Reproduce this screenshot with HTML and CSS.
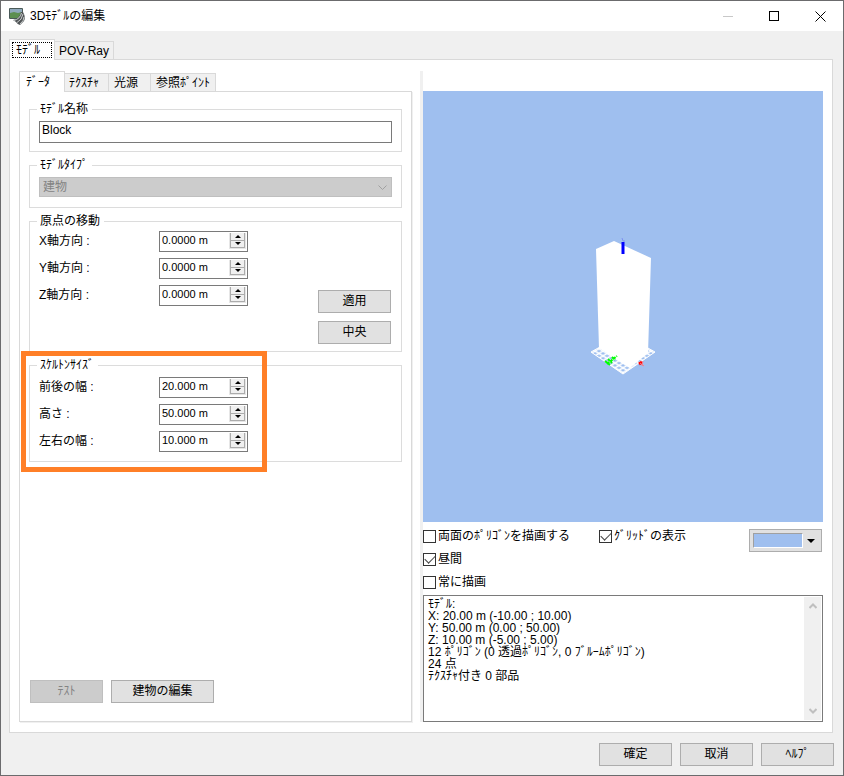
FILE: index.html
```html
<!DOCTYPE html>
<html lang="ja">
<head>
  <meta charset="UTF-8">
  <meta name="viewport" content="width=device-width, initial-scale=1.0">
  <title>3Dﾓﾃﾞﾙの編集</title>
  <link rel="stylesheet" href="styles.css">
</head>
<body>
  <div class="window">
    <header class="titlebar">
      <svg class="app-icon" width="16" height="17" viewBox="0 0 16 17">
        <rect x="0" y="0" width="14" height="11" rx="1" fill="#4a5a58"/>
        <rect x="1" y="1" width="12" height="4" fill="#8fa9bb"/>
        <path d="M1 5L5 4L9 5L13 4V10H1Z" fill="#5c8f50"/>
        <path d="M4 12Q10 11 12 4L14 4Q17 9 15 13L11 17Q9 17 7 14Z" fill="#505456"/>
        <path d="M5 12.500Q11 11 12.500 5M8 14.500Q13 12 14 6M11 16Q15 13 15 9" fill="none" stroke="#c9cdcd"/>
      </svg>
      <h1 class="title">3Dﾓﾃﾞﾙの編集</h1>
      <div class="window-buttons">
        <button type="button" aria-label="最小化" disabled>
          <svg width="11" height="11" viewBox="0 0 11 11"><path d="M0 5.500H10" stroke="#c8c8c8"/></svg>
        </button>
        <button type="button" aria-label="最大化">
          <svg width="11" height="11" viewBox="0 0 11 11"><rect x=".5" y=".5" width="9" height="9" fill="none" stroke="#000"/></svg>
        </button>
        <button type="button" aria-label="閉じる">
          <svg width="11" height="11" viewBox="0 0 11 11"><path d="M.5 .5L10.500 10.500M10.500 .5L.5 10.500" stroke="#000"/></svg>
        </button>
      </div>
    </header>

    <main class="client">
      <div class="tabs" role="tablist">
        <button type="button" class="tab active focused" role="tab" aria-selected="true">ﾓﾃﾞﾙ</button>
        <button type="button" class="tab" role="tab">POV-Ray</button>
      </div>
      <div class="page">
        <section class="settings">
          <div class="tabs" role="tablist">
            <button type="button" class="tab active" role="tab" aria-selected="true">ﾃﾞｰﾀ</button>
            <button type="button" class="tab texture" role="tab">ﾃｸｽﾁｬ</button>
            <button type="button" class="tab light" role="tab">光源</button>
            <button type="button" class="tab points" role="tab">参照ﾎﾟｲﾝﾄ</button>
          </div>
          <form class="panel">
            <fieldset class="group">
              <legend>ﾓﾃﾞﾙ名称</legend>
              <input class="text" type="text" value="Block" aria-label="ﾓﾃﾞﾙ名称">
            </fieldset>

            <fieldset class="group type">
              <legend>ﾓﾃﾞﾙﾀｲﾌﾟ</legend>
              <div class="combo">
                <select aria-label="ﾓﾃﾞﾙﾀｲﾌﾟ" disabled><option>建物</option></select>
                <svg width="9" height="6" viewBox="0 0 9 6"><path d="M.5 .5L4.500 4.500L8.500 .5" fill="none" stroke="#a0a0a0"/></svg>
              </div>
            </fieldset>

            <fieldset class="group origin">
              <legend>原点の移動</legend>
              <div class="origin-body">
                <div class="fields">
                  <div class="field">
                    <label for="x">X軸方向 :</label>
                    <div class="spin"><input id="x" type="text" value="0.0000 m"><span class="arrows"><button type="button" class="up" aria-label="増やす"></button><button type="button" class="down" aria-label="減らす"></button></span></div>
                  </div>
                  <div class="field">
                    <label for="y">Y軸方向 :</label>
                    <div class="spin"><input id="y" type="text" value="0.0000 m"><span class="arrows"><button type="button" class="up" aria-label="増やす"></button><button type="button" class="down" aria-label="減らす"></button></span></div>
                  </div>
                  <div class="field">
                    <label for="z">Z軸方向 :</label>
                    <div class="spin"><input id="z" type="text" value="0.0000 m"><span class="arrows"><button type="button" class="up" aria-label="増やす"></button><button type="button" class="down" aria-label="減らす"></button></span></div>
                  </div>
                </div>
                <div class="origin-buttons">
                  <button type="button" class="btn">適用</button>
                  <button type="button" class="btn">中央</button>
                </div>
              </div>
            </fieldset>

            <fieldset class="group size">
              <legend>ｽｹﾙﾄﾝｻｲｽﾞ</legend>
              <div class="fields">
                <div class="field">
                  <label for="depth">前後の幅 :</label>
                  <div class="spin"><input id="depth" type="text" value="20.000 m"><span class="arrows"><button type="button" class="up" aria-label="増やす"></button><button type="button" class="down" aria-label="減らす"></button></span></div>
                </div>
                <div class="field">
                  <label for="height">高さ :</label>
                  <div class="spin"><input id="height" type="text" value="50.000 m"><span class="arrows"><button type="button" class="up" aria-label="増やす"></button><button type="button" class="down" aria-label="減らす"></button></span></div>
                </div>
                <div class="field">
                  <label for="width">左右の幅 :</label>
                  <div class="spin"><input id="width" type="text" value="10.000 m"><span class="arrows"><button type="button" class="up" aria-label="増やす"></button><button type="button" class="down" aria-label="減らす"></button></span></div>
                </div>
              </div>
              <div class="highlight"></div>
            </fieldset>

            <div class="panel-buttons">
              <button type="button" class="btn" disabled>ﾃｽﾄ</button>
              <button type="button" class="btn wide">建物の編集</button>
            </div>
          </form>
        </section>

        <section class="preview">
          <div class="view">
            <svg viewBox="0 0 400 431" role="img" aria-label="Block">
              <defs>
                <pattern id="grid" width="4" height="4" patternUnits="userSpaceOnUse" patternTransform="matrix(1 .6 -1 .6 200 243)">
                  <rect width="4" height="4" fill="#fff"/>
                  <rect x="1" y="1" width="2.500" height="2.500" fill="#9fbfef"/>
                </pattern>
              </defs>
              <path d="M168 261L200 243L232 261L200 283Z" fill="url(#grid)" stroke="#fff"/>
              <path d="M173 158L191 150L228 167L225 262L207 277L176 257Z" fill="#fff"/>
              <path d="M200 151V163" stroke="#00f" stroke-width="3"/>
              <path d="M199 147L200 150L202 150" fill="none" stroke="#7d91f0"/>
              <path d="M184 273L194 265M182 270L187 274M185 268L189 272M189 266L192 269" stroke="#0f0" stroke-width="2" stroke-dasharray="3 1"/>
              <path d="M216 273L219 271" stroke="#f00" stroke-width="3"/>
              <path d="M217 272L221 275M220 270L219 275" stroke="#f08090"/>
            </svg>
          </div>
          <div class="options">
            <div class="checks">
              <label><input type="checkbox">両面のﾎﾟﾘｺﾞﾝを描画する</label>
              <label><input type="checkbox" checked>昼間</label>
              <label><input type="checkbox">常に描画</label>
            </div>
            <label><input type="checkbox" checked>ｸﾞﾘｯﾄﾞの表示</label>
            <button type="button" class="color" aria-label="背景色"><span class="swatch"></span><span class="caret"></span></button>
          </div>
          <div class="log">
            <textarea aria-label="ﾓﾃﾞﾙ情報" readonly>ﾓﾃﾞﾙ:
X: 20.00 m (-10.00 ; 10.00)
Y: 50.00 m (0.00 ; 50.00)
Z: 10.00 m (-5.00 ; 5.00)
12 ﾎﾟﾘｺﾞﾝ (0 透過ﾎﾟﾘｺﾞﾝ, 0 ﾌﾞﾙｰﾑﾎﾟﾘｺﾞﾝ)
24 点
ﾃｸｽﾁｬ付き 0 部品</textarea>
            <div class="scrollbar">
              <svg width="8" height="6" viewBox="0 0 8 6"><path d="M.5 5L4 1.500L7.500 5" fill="none" stroke="#bfbfbf" stroke-width="2"/></svg>
              <svg width="8" height="6" viewBox="0 0 8 6"><path d="M.5 1L4 4.500L7.500 1" fill="none" stroke="#bfbfbf" stroke-width="2"/></svg>
            </div>
          </div>
        </section>
      </div>
    </main>

    <footer class="footer">
      <button type="button" class="btn">確定</button>
      <button type="button" class="btn">取消</button>
      <button type="button" class="btn">ﾍﾙﾌﾟ</button>
    </footer>
  </div>
</body>
</html>
```
FILE: styles.css
```css
* {
  margin: 0;
  padding: 0;
  box-sizing: border-box;
}

body, button, input, select, textarea {
  font-family: "Liberation Sans", "Noto Sans CJK JP", sans-serif;
  font-size: 12px;
  color: #000;
}

button, input, select, textarea {
  border: none;
  border-radius: 0;
  outline: none;
  background: none;
}

svg {
  display: block;
}

.window {
  display: flex;
  flex-direction: column;
  min-height: 100vh;
  border: 1px solid #6b6b6d;
  background: #f0f0f0;
}

/* Title bar */
.titlebar {
  display: flex;
  align-items: center;
  height: 30px;
  padding-left: 8px;
  background: #fff;
}

.title {
  flex: 1;
  margin-left: 5px;
  font-size: 12px;
  font-weight: normal;
  line-height: 30px;
}

.window-buttons {
  display: flex;
}

.window-buttons button {
  display: flex;
  align-items: center;
  justify-content: center;
  width: 46px;
  height: 30px;
}

/* Tabs */
.client {
  flex: 1;
  display: flex;
  flex-direction: column;
  padding: 8px 10px 0 8px;
}

.tabs {
  display: flex;
  align-items: flex-end;
  height: 20px;
}

.tab {
  height: 18px;
  padding: 0 4px;
  border: 1px solid #d9d9d9;
  border-bottom: none;
  border-left: none;
  background: #f0f0f0;
  line-height: 18px;
  text-align: left;
  white-space: nowrap;
}

.tab.active {
  position: relative;
  width: 46px;
  height: 21px;
  margin-bottom: -1px;
  padding: 0 6px;
  border-left: 1px solid #d9d9d9;
  background: #fff;
  line-height: 17px;
}

.tab.focused::before {
  content: "";
  position: absolute;
  inset: 2px;
  border: 1px dotted #000;
}

.tab.texture {
  width: 44px;
}

.tab.light {
  width: 42px;
  padding: 0 5px;
}

.tab.points {
  width: 65px;
  padding: 0 5px;
}

.page {
  flex: 1;
  display: grid;
  grid-template-columns: 395fr 403fr;
  column-gap: 6px;
  padding: 11px 9px 10px;
  border: 1px solid #d9d9d9;
  background: #fff;
}

.settings {
  display: flex;
  flex-direction: column;
}

.panel {
  flex: 1;
  display: flex;
  flex-direction: column;
  gap: 7px;
  margin-right: 2px;
  padding: 11px 9px 17px;
  border: 1px solid #d9d9d9;
  box-shadow: 1px 1px 0 #f0f0f0;
}

/* Groups */
.group {
  position: relative;
  min-width: 0;
  padding: 5px 9px 8px;
  border: 1px solid #dcdcdc;
}

.group legend {
  height: 13px;
  margin-left: -2px;
  padding: 0 4px 0 3px;
  line-height: 13px;
}

.group.type {
  padding-bottom: 10px;
}

.group.origin {
  padding: 3px 9px 7px;
}

.group.size {
  padding-bottom: 9px;
}

.text {
  display: block;
  width: 100%;
  height: 22px;
  padding: 0 2px 4px;
  border: 1px solid #7a7a7a;
}

.combo {
  position: relative;
}

.combo select {
  display: block;
  appearance: none;
  width: 100%;
  height: 20px;
  padding: 0 3px;
  border: 1px solid #bfbfbf;
  background: #ccc;
  color: #838383;
  opacity: 1;
}

.combo svg {
  position: absolute;
  right: 5px;
  top: 8px;
}

.origin-body {
  display: flex;
  justify-content: space-between;
  min-height: 113px;
}

.origin-buttons {
  display: flex;
  flex-direction: column;
  justify-content: flex-end;
  gap: 8px;
  padding-right: 1px;
}

.fields {
  display: flex;
  flex-direction: column;
  gap: 6px;
}

.field {
  display: flex;
  height: 21px;
}

.field label {
  width: 120px;
  line-height: 20px;
}

.spin {
  display: flex;
  width: 89px;
  padding: 1px;
  border: 1px solid #7a7a7a;
}

.spin input {
  flex: 1;
  min-width: 0;
  padding: 0 1px 3px;
  font-size: 11px;
}

.arrows {
  display: flex;
  flex-direction: column;
  width: 17px;
  height: 16px;
  border: 1px solid #e6e6e6;
  border-top: none;
}

.arrows button {
  flex: 1;
  display: flex;
  align-items: center;
  justify-content: center;
  border: 1px solid #acacac;
  border-top: none;
  background: #f0f0f0;
}

.arrows button::before {
  content: "";
  border: 3px solid transparent;
}

.arrows .up::before {
  border-top: none;
  border-bottom-color: #000;
}

.arrows .down::before {
  border-bottom: none;
  border-top-color: #000;
}

.highlight {
  position: absolute;
  left: -9px;
  top: -21px;
  width: 246px;
  height: 121px;
  border: 5px solid #ff7f27;
  pointer-events: none;
}

/* Buttons */
.btn {
  width: 73px;
  height: 23px;
  border: 1px solid #adadad;
  background: #e1e1e1;
  line-height: 19px;
}

.btn.wide {
  width: 103px;
}

.btn:disabled {
  border-color: #bfbfbf;
  background: #ccc;
  color: #838383;
}

.panel-buttons {
  display: flex;
  gap: 8px;
  margin-top: auto;
  padding: 0 0 1px 1px;
}

.footer {
  display: flex;
  justify-content: flex-end;
  gap: 8px;
  padding: 10px 9px 9px;
}

/* Preview */
.preview {
  display: flex;
  flex-direction: column;
  padding-top: 20px;
  border-left: 3px solid #f0f0f0;
}

.view {
  flex: 1;
  display: flex;
  align-items: center;
  justify-content: center;
  background: #9fbfef;
}

.view svg {
  width: 100%;
}

.options {
  display: flex;
  height: 73px;
  padding: 7px 1px 0 0;
}

.checks {
  display: flex;
  flex-direction: column;
  width: 176px;
  gap: 8px;
}

.options label {
  display: flex;
  align-items: center;
  gap: 2px;
  height: 15px;
  line-height: 15px;
  white-space: nowrap;
}

.options input {
  appearance: none;
  width: 13px;
  height: 13px;
  border: 1px solid #333;
  background: #fff;
}

.options input:checked::before {
  content: "";
  display: block;
  width: 9px;
  height: 5px;
  margin: 1px;
  border: solid #444;
  border-width: 0 0 1px 1px;
  transform: rotate(-45deg);
}

.color {
  display: flex;
  align-items: center;
  width: 73px;
  height: 23px;
  margin-left: auto;
  padding: 0 6px 0 3px;
  border: 1px solid #adadad;
  background: #e1e1e1;
}

.swatch {
  width: 50px;
  height: 15px;
  border: 1px solid;
  border-color: #a0a0a0 #fff #fff #a0a0a0;
  background: #9fbfef;
}

.caret {
  margin-left: auto;
  border: 4px solid transparent;
  border-top-color: #000;
  border-bottom: none;
}

.log {
  display: flex;
  height: 127px;
  padding: 1px;
  border: 1px solid #7a7a7a;
}

.log textarea {
  flex: 1;
  min-width: 0;
  padding: 1px 3px;
  resize: none;
  overflow: hidden;
  line-height: 12px;
  white-space: pre;
}

.scrollbar {
  display: flex;
  flex-direction: column;
  justify-content: space-between;
  align-items: center;
  width: 17px;
  padding: 6px 0;
  background: #f0f0f0;
}
```
